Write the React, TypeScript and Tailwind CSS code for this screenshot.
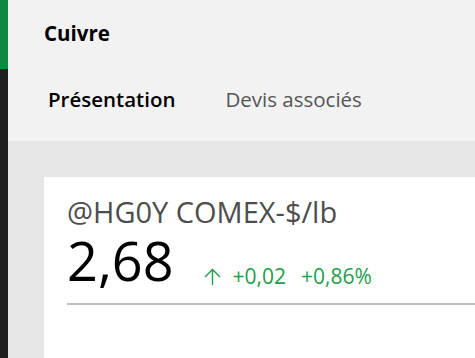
export default function App() {
  return (
    <div
      className="flex h-[358px] w-[475px] overflow-hidden"
      style={{ fontFamily: '"Open Sans", "Noto Sans", sans-serif' }}
    >
      {/* left rail */}
      <div className="flex w-2 shrink-0 flex-col">
        <div className="h-[69px] bg-[#10893e]" />
        <div className="flex-1 bg-[#1f1f1f]" />
      </div>

      <div className="flex flex-1 flex-col bg-[#e6e6e6]">
        <header className="h-[141px] bg-[#f2f2f2]">
          <h1 className="pl-9 pt-[19px] text-[20.5px] font-bold leading-[28px] text-black">
            Cuivre
          </h1>
          <nav className="mt-[38px] flex gap-[50px] pl-10 text-[20.5px] leading-[28px]">
            <span className="font-semibold text-black">Présentation</span>
            <span className="text-[#555555]">Devis associés</span>
          </nav>
        </header>

        <main className="flex-1 pl-9 pt-9">
          <section className="h-full bg-white pl-[23px] pt-[18px]">
            <div className="text-[29px] leading-[34px] text-[#4d4d4d]">@HG0Y COMEX-$/lb</div>
            <div className="mt-[2px] flex items-baseline">
              <span className="text-[54px] leading-[58px] text-black">2,68</span>
              <span className="ml-[29px] flex translate-y-[3px] items-baseline text-[21px] text-[#1f9d4a]">
                <svg
                  width="19"
                  height="17"
                  viewBox="0 0 19 17"
                  fill="none"
                  stroke="currentColor"
                  strokeWidth="1.4"
                  className="translate-y-[1px]"
                >
                  <path d="M9.5 1.5V17M2 9l7.5-7.5L17 9" />
                </svg>
                <span className="ml-[11px]">+0,02</span>
                <span className="ml-[15px]">+0,86%</span>
              </span>
            </div>
            <div className="mt-[13px] h-[2px] bg-[#bdbdbd]" />
          </section>
        </main>
      </div>
    </div>
  );
}
